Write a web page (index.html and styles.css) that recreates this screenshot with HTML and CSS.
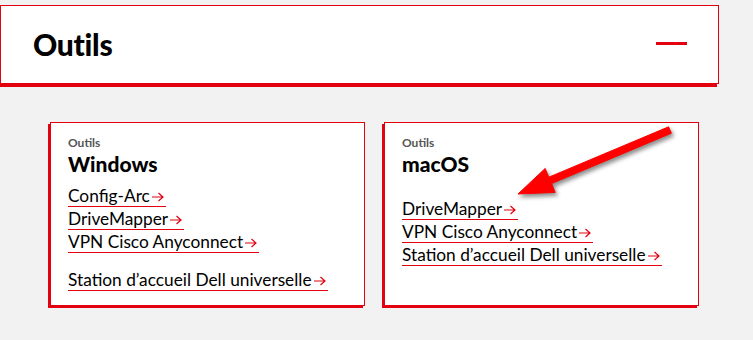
FILE: index.html
```html
<!DOCTYPE html>
<html lang="fr">
  <head>
    <meta charset="utf-8">
    <title>Outils</title>
    <link rel="stylesheet" href="styles.css">
  </head>
  <body>
    <section class="panel">
      <h2 class="panel-title">Outils</h2>
      <span class="panel-toggle"></span>
    </section>

    <div class="cards">
      <div class="card">
        <p class="card-kicker">Outils</p>
        <h3 class="card-title">Windows</h3>
        <a class="tool-link" href="#">Config-Arc<svg class="arrow" viewBox="0 0 12 10"><path d="M0 5h11M6.5 1l4.5 4-4.5 4"/></svg></a>
        <a class="tool-link" href="#">DriveMapper<svg class="arrow" viewBox="0 0 12 10"><path d="M0 5h11M6.5 1l4.5 4-4.5 4"/></svg></a>
        <a class="tool-link" href="#">VPN Cisco Anyconnect<svg class="arrow" viewBox="0 0 12 10"><path d="M0 5h11M6.5 1l4.5 4-4.5 4"/></svg></a>
        <span class="spacer"></span>
        <a class="tool-link" href="#">Station d’accueil Dell universelle<svg class="arrow" viewBox="0 0 12 10"><path d="M0 5h11M6.5 1l4.5 4-4.5 4"/></svg></a>
      </div>
      <div class="card">
        <p class="card-kicker">Outils</p>
        <h3 class="card-title">macOS</h3>
        <span class="spacer spacer-lg"></span>
        <a class="tool-link" href="#">DriveMapper<svg class="arrow" viewBox="0 0 12 10"><path d="M0 5h11M6.5 1l4.5 4-4.5 4"/></svg></a>
        <a class="tool-link" href="#">VPN Cisco Anyconnect<svg class="arrow" viewBox="0 0 12 10"><path d="M0 5h11M6.5 1l4.5 4-4.5 4"/></svg></a>
        <a class="tool-link" href="#">Station d’accueil Dell universelle<svg class="arrow" viewBox="0 0 12 10"><path d="M0 5h11M6.5 1l4.5 4-4.5 4"/></svg></a>
      </div>
    </div>

    <!-- annotation arrow drawn over the screenshot -->
    <svg class="annotation" width="753" height="340" viewBox="0 0 753 340">
      <polygon points="668.6,126.8 548.8,177.2 545.2,168.4 518,194 555.2,192.4 551.6,183.6 671.4,133.2" />
    </svg>
  </body>
</html>
```

FILE: styles.css
```css
body {
  position: relative;
  margin: 0;
  width: 753px;
  height: 340px;
  overflow: hidden;
  background: #f2f2f2;
  font-family: Lato, "Noto Sans", sans-serif;
  color: #000;
}
.panel {
  display: flex;
  justify-content: space-between;
  align-items: center;
  box-sizing: border-box;
  width: 719px;
  height: 79px;
  margin-top: 5px;
  padding: 0 31px 2px 32px;
  background: #fff;
  border: 1px solid #e3000f;
  box-shadow: -2px 3px 0 #e3000f;
}
.panel-title {
  margin: 0;
  font-size: 30px;
  font-weight: 900;
  letter-spacing: -0.3px;
}
.panel-toggle {
  display: block;
  width: 31px;
  height: 3px;
  background: #e3000f;
}
.cards {
  display: flex;
  gap: 19px;
  margin: 38px 0 0 50px;
}
.card {
  display: flex;
  flex-direction: column;
  align-items: flex-start;
  box-sizing: border-box;
  width: 315px;
  height: 184px;
  padding: 12px 17px 11px;
  background: #fff;
  border: 1px solid #e3000f;
  box-shadow: -2px 2px 0 #e3000f;
}
.card-kicker {
  margin: 0;
  font-size: 12px;
  font-weight: 700;
  color: #555;
  line-height: 16px;
}
.card-title {
  margin: 0 0 8px;
  font-size: 21px;
  font-weight: 900;
  line-height: 26px;
}
.tool-link {
  display: inline-flex;
  align-items: center;
  gap: 2px;
  height: 21px;
  margin-bottom: 1px;
  padding-right: 2px;
  font-size: 17.3px;
  line-height: 21px;
  color: #000;
  text-decoration: none;
  border-bottom: 1px solid #e3000f;
}
.arrow {
  width: 12px;
  height: 10px;
  margin-top: 3px;
  fill: none;
  stroke: #e3000f;
  stroke-width: 1.2;
}
.spacer {
  display: block;
  height: 15px;
}
.spacer-lg {
  height: 13px;
}
.annotation {
  position: absolute;
  left: 0;
  top: 0;
  pointer-events: none;
}
.annotation polygon {
  fill: #ff0000;
  stroke: #ff0000;
  stroke-width: 1;
  stroke-linejoin: round;
  filter: drop-shadow(2px 3px 2px rgba(0, 0, 0, 0.45));
}
```
